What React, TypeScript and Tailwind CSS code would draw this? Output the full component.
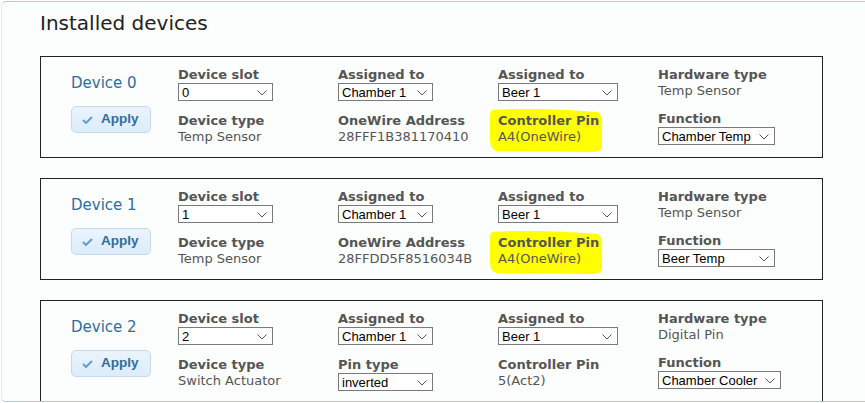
import React from "react";

const dv = { fontFamily: '"DejaVu Sans", Verdana, sans-serif' };
const ar = { fontFamily: '"Liberation Sans", Arial, sans-serif' };

function Select({ value, w }: { value: string; w: string }) {
  return (
    <div
      className={`relative flex h-[18px] items-center border border-[#7a7a7a] bg-white ${w}`}
    >
      <span className="pl-[3px] text-[13px] leading-[15px] text-black" style={ar}>
        {value}
      </span>
      <svg
        className="absolute right-[5px] top-[6px]"
        width="10"
        height="6"
        viewBox="0 0 10 6"
      >
        <polyline points="0.5,0.5 5,5 9.5,0.5" fill="none" stroke="#555" strokeWidth="1" />
      </svg>
    </div>
  );
}

function Label({ children }: { children: React.ReactNode }) {
  return (
    <div className="text-[13px] font-bold leading-[16px] text-[#555] whitespace-nowrap" style={dv}>
      {children}
    </div>
  );
}

function Value({ children }: { children: React.ReactNode }) {
  return (
    <div className="text-[13px] leading-[16px] text-[#555] whitespace-nowrap" style={dv}>
      {children}
    </div>
  );
}

function Cell({ label, children }: { label: string; children: React.ReactNode }) {
  return (
    <div className="flex h-[34px] flex-col">
      <Label>{label}</Label>
      {children}
    </div>
  );
}

function Column({ a, b }: { a: React.ReactNode; b: React.ReactNode }) {
  return (
    <div className="flex w-[160px] flex-col gap-[12px]">
      {a}
      {b}
    </div>
  );
}

function Highlight() {
  return (
    <svg
      className="absolute left-[448px] top-[50px]"
      width="116"
      height="48"
      viewBox="0 0 116 48"
    >
      <path
        d="M4,3 Q50,0 108,5 Q114,6 113,22 L113,40 Q112,45 102,45 L8,44 Q1,43 1,33 L1,9 Q1,3 4,3 Z"
        fill="#ffff00"
      />
    </svg>
  );
}

function ApplyButton() {
  return (
    <div className="flex h-[27px] w-[80px] items-center rounded-[5px] border border-[#c5dbec] bg-gradient-to-b from-[#eaf4fd] to-[#dcecfa]">
      <svg className="ml-[10px]" width="11" height="8" viewBox="0 0 11 8">
        <polyline points="1,4 4,7 10,1" fill="none" stroke="#5b9fd6" strokeWidth="2" />
      </svg>
      <span className="ml-[8px] text-[13.5px] font-bold text-[#2e6e9e]" style={ar}>
        Apply
      </span>
    </div>
  );
}

type Dev = {
  n: number;
  slot: string;
  type: string;
  c2b: React.ReactNode;
  c3b: React.ReactNode;
  hw: string;
  fn: string;
  fnW: string;
  hl: boolean;
};

function DeviceBox({ d }: { d: Dev }) {
  return (
    <div className="relative flex h-[102px] w-[783px] shrink-0 border border-[#222] pl-[30px] pt-[10px]">
      {d.hl && <Highlight />}
      <div className="flex w-[107px] flex-col">
        <div className="mt-[7px] text-[15px] leading-[18px] text-[#2e6e9e]" style={dv}>
          Device {d.n}
        </div>
        <div className="mt-[14px]">
          <ApplyButton />
        </div>
      </div>
      <Column
        a={
          <Cell label="Device slot">
            <Select value={d.slot} w="w-[95px]" />
          </Cell>
        }
        b={
          <div>
            <Label>Device type</Label>
            <Value>{d.type}</Value>
          </div>
        }
      />
      <Column
        a={
          <Cell label="Assigned to">
            <Select value="Chamber 1" w="w-[95px]" />
          </Cell>
        }
        b={d.c2b}
      />
      <Column
        a={
          <Cell label="Assigned to">
            <Select value="Beer 1" w="w-[120px]" />
          </Cell>
        }
        b={<div className="relative">{d.c3b}</div>}
      />
      <Column
        a={
          <div>
            <Label>Hardware type</Label>
            <Value>{d.hw}</Value>
          </div>
        }
        b={
          <div className="flex flex-col">
            <Label>Function</Label>
            <Select value={d.fn} w={d.fnW} />
          </div>
        }
      />
    </div>
  );
}

export default function App() {
  const devices: Dev[] = [
    {
      n: 0,
      slot: "0",
      type: "Temp Sensor",
      c2b: (
        <div>
          <Label>OneWire Address</Label>
          <Value>28FFF1B381170410</Value>
        </div>
      ),
      c3b: (
        <div>
          <Label>Controller Pin</Label>
          <Value>A4(OneWire)</Value>
        </div>
      ),
      hw: "Temp Sensor",
      fn: "Chamber Temp",
      fnW: "w-[117px]",
      hl: true,
    },
    {
      n: 1,
      slot: "1",
      type: "Temp Sensor",
      c2b: (
        <div>
          <Label>OneWire Address</Label>
          <Value>28FFDD5F8516034B</Value>
        </div>
      ),
      c3b: (
        <div>
          <Label>Controller Pin</Label>
          <Value>A4(OneWire)</Value>
        </div>
      ),
      hw: "Temp Sensor",
      fn: "Beer Temp",
      fnW: "w-[117px]",
      hl: true,
    },
    {
      n: 2,
      slot: "2",
      type: "Switch Actuator",
      c2b: (
        <div className="flex flex-col">
          <Label>Pin type</Label>
          <Select value="inverted" w="w-[95px]" />
        </div>
      ),
      c3b: (
        <div>
          <Label>Controller Pin</Label>
          <Value>5(Act2)</Value>
        </div>
      ),
      hw: "Digital Pin",
      fn: "Chamber Cooler",
      fnW: "w-[123px]",
      hl: false,
    },
  ];

  return (
    <div className="h-[403px] w-[865px] overflow-hidden bg-white pl-[1px] pt-[1px]">
      <div className="h-[401px] w-[900px] overflow-hidden rounded-[5px] border border-[#aecbe0] border-l-[#e3ecf3] bg-[#fcfdfd] pl-[38px]">
        <div className="mt-[10px] text-[20px] leading-[23px] text-[#222]" style={dv}>
          Installed devices
        </div>
        <div className="mt-[21px] flex flex-col gap-[20px]">
          {devices.map((d) => (
            <DeviceBox key={d.n} d={d} />
          ))}
        </div>
      </div>
    </div>
  );
}
